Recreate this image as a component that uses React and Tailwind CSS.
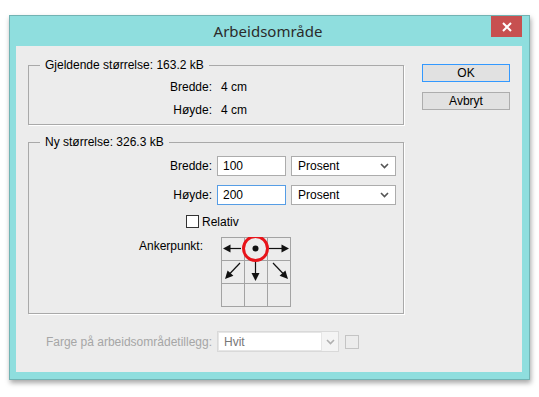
import React from "react";

const F = { fontFamily: '"Liberation Sans", Arial, sans-serif' };

function Chevron({ color = "#555" }) {
  return (
    <svg width="9" height="6" viewBox="0 0 9 6">
      <path d="M1 1 L4.5 4.5 L8 1" fill="none" stroke={color} strokeWidth="1.6" />
    </svg>
  );
}

function Select({ value }) {
  return (
    <div className="w-[105px] h-[20px] bg-white border border-[#acacac] flex items-center pl-[6px] pr-[6px] justify-between text-[12px] text-black">
      <span>{value}</span>
      <Chevron />
    </div>
  );
}

function Anchor() {
  return (
    <div className="relative w-[70px] h-[70px]">
      <div className="grid grid-cols-[22px_22px_22px] grid-rows-[22px_22px_22px] gap-px p-px bg-[#a3a3a3] w-[70px] h-[70px]">
        {Array.from({ length: 9 }).map((_, i) => (
          <div key={i} className="bg-[#ececec]" />
        ))}
      </div>
      <svg className="absolute left-0 top-0" width="70" height="70" viewBox="0 0 70 70">
        <line x1="9" y1="11.5" x2="20" y2="11.5" stroke="#111" strokeWidth="1.2" />
        <polygon points="2,11.5 9.5,7.5 9.5,15.5" fill="#111" />
        <line x1="48" y1="11.5" x2="61" y2="11.5" stroke="#111" strokeWidth="1.2" />
        <polygon points="68,11.5 60.5,7.5 60.5,15.5" fill="#111" />
        <line x1="34.5" y1="24" x2="34.5" y2="37" stroke="#111" strokeWidth="1.2" />
        <polygon points="34.5,44 30.5,36 38.5,36" fill="#111" />
        <line x1="19" y1="26" x2="9" y2="36.5" stroke="#111" strokeWidth="1.2" />
        <polygon points="4,42 12.4,38.8 6.6,33.4" fill="#111" />
        <line x1="52" y1="26" x2="62" y2="36.5" stroke="#111" strokeWidth="1.2" />
        <polygon points="67,42 64.4,33.4 58.6,38.8" fill="#111" />
        <circle cx="34.5" cy="11.5" r="12" fill="none" stroke="#e8141a" strokeWidth="3" />
        <circle cx="34.5" cy="11.5" r="3" fill="#111" />
      </svg>
    </div>
  );
}

export default function App() {
  return (
    <div className="w-[539px] h-[397px] bg-white pt-[15px] pl-[9px]" style={F}>
      <div className="w-[521px] bg-[#8fdede] border border-[#72b3b3] shadow-[1px_3px_5px_rgba(0,0,0,0.35)] flex flex-col pl-[6px] pr-[7px] pb-[7px]">
        <div className="relative h-[30px] flex items-center justify-center">
          <span className="text-[15px] text-[#2b2b2b] pr-[2px]" style={{ fontFamily: '"Noto Sans", "Open Sans", sans-serif' }}>
            Arbeidsområde
          </span>
          <div className="absolute right-[0px] top-0 w-[31px] h-[21px] bg-[#c75050] flex items-center justify-center">
            <svg width="10" height="10" viewBox="0 0 10 10">
              <path d="M1 1 L9 9 M9 1 L1 9" stroke="#fff" strokeWidth="2" />
            </svg>
          </div>
        </div>
        <div className="bg-[#ececec] h-[326px] flex flex-col pl-[12px] pt-[12px] text-[12px] text-black">
          <div className="flex">
            <div className="w-[376px] flex flex-col">
              <fieldset className="border border-[#a9a9a9] shadow-[1px_1px_0_#fff] pl-[11px] pb-[7px] m-0">
                <legend className="px-[5px] leading-[14px]">Gjeldende størrelse: 163.2 kB</legend>
                <div className="flex flex-col pt-[8px] gap-[9px] -ml-[11px]">
                  <div className="flex leading-[14px]">
                    <span className="w-[183px] text-right">Bredde:</span>
                    <span className="ml-[9px]">4 cm</span>
                  </div>
                  <div className="flex leading-[14px]">
                    <span className="w-[183px] text-right">Høyde:</span>
                    <span className="ml-[9px]">4 cm</span>
                  </div>
                </div>
              </fieldset>
              <fieldset className="mt-[10px] border border-[#a9a9a9] shadow-[1px_1px_0_#fff] pl-[11px] pb-[6px] m-0">
                <legend className="px-[5px] leading-[14px]">Ny størrelse: 326.3 kB</legend>
                <div className="flex flex-col pt-[7px] -ml-[11px]">
                  <div className="flex items-center">
                    <span className="w-[183px] text-right">Bredde:</span>
                    <div className="ml-[5px] w-[69px] h-[20px] bg-white border border-[#acacac] flex items-center pl-[5px]">100</div>
                    <div className="ml-[5px]"><Select value="Prosent" /></div>
                  </div>
                  <div className="flex items-center mt-[9px]">
                    <span className="w-[183px] text-right">Høyde:</span>
                    <div className="ml-[5px] w-[69px] h-[20px] bg-white border border-[#569de5] flex items-center pl-[5px]">200</div>
                    <div className="ml-[5px]"><Select value="Prosent" /></div>
                  </div>
                  <div className="flex items-center mt-[10px] pl-[157px] h-[13px]">
                    <div className="w-[13px] h-[13px] bg-white border border-[#333]" />
                    <span className="ml-[3px]">Relativ</span>
                  </div>
                  <div className="flex mt-[9px]">
                    <span className="w-[174px] text-right pt-[2px] leading-[14px]">Ankerpunkt:</span>
                    <div className="ml-[18px]"><Anchor /></div>
                  </div>
                </div>
              </fieldset>
            </div>
            <div className="ml-[18px] pt-[6px] flex flex-col gap-[10px]">
              <div className="w-[88px] h-[18px] bg-[#e1e1e1] border border-[#3399ff] flex items-center justify-center">OK</div>
              <div className="w-[88px] h-[18px] bg-[#e1e1e1] border border-[#adadad] flex items-center justify-center">Avbryt</div>
            </div>
          </div>
          <div className="flex items-center mt-[17px]">
            <span className="w-[184px] text-right text-[#a6a6a6]">Farge på arbeidsområdetillegg:</span>
            <div className="ml-[5px] w-[122px] h-[21px] bg-[#f4f4f4] border border-[#d9d9d9] flex items-center">
              <div className="w-[104px] h-[19px] bg-white border border-[#e6e6e6] flex items-center pl-[5px] text-[#777]">Hvit</div>
              <div className="flex-1 flex justify-center"><Chevron color="#b0b0b0" /></div>
            </div>
            <div className="ml-[6px] w-[14px] h-[14px] border border-[#c4c4c4]" />
          </div>
        </div>
      </div>
    </div>
  );
}
